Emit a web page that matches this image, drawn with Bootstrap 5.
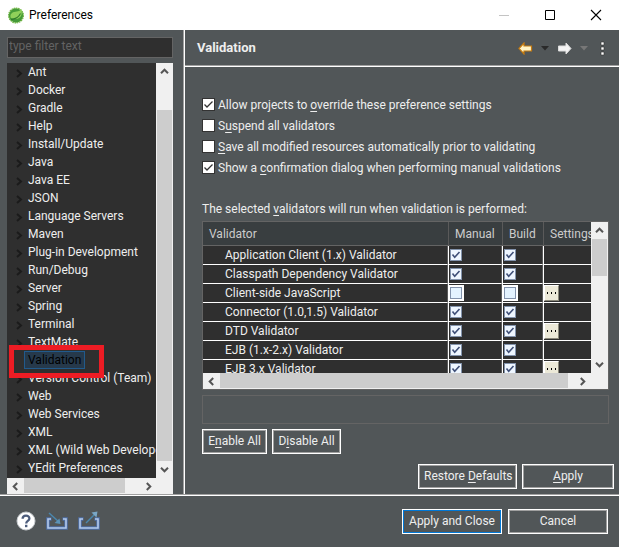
<!DOCTYPE html>
<html lang="en">
<head>
<meta charset="utf-8">
<meta name="viewport" content="width=device-width, initial-scale=1">
<title>Preferences</title>
<link href="https://cdn.jsdelivr.net/npm/bootstrap@5.3.0/dist/css/bootstrap.min.css" rel="stylesheet">
<style>
  body { font: 12px/18px Roboto, "Noto Sans", sans-serif; background: #515658; color: #eee; }
  button { font: inherit; color: inherit; padding: 0; border: 0; background: none; }
  svg { display: block; }
  u { text-underline-offset: 2px; }
  .title-bar { height: 30px; background: #fff; color: #000; padding: 0 17px 0 8px; }
  .title-bar span { margin-left: 5px; }
  .window-buttons { gap: 34px; }
  .side-pane { width: 184px; padding: 7px 10px 0 7px; border-right: 1px solid #a0a0a0; }
  .filter-box { height: 21px; padding: 0 1px 3px; border: 1px solid #646464; background: #2f2f2f; color: #eee; line-height: 15px; border-radius: 0; }
  .filter-box::placeholder { color: #636363; opacity: 1; }
  .tree-frame { margin-top: 5px; background: #f0f0f0; }
  .tree-list { background: #2f2f2f; }
  .tree-list li { height: 18px; padding-left: 8px; white-space: nowrap; }
  .tree-list .twisty { width: 9px; margin-top: 2px; }
  .tree-list a { color: #eee; padding: 0 3px; border: 1px solid transparent; line-height: 16px; }
  .tree-list a.picked { background: #26394b; border-color: #215a8c; color: #000; }
  .callout-box { left: 2px; top: 282px; width: 95px; height: 33px; border: 5px solid #ed1c24; pointer-events: none; }
  .scroll-y { width: 17px; background: #f0f0f0; }
  .scroll-x { height: 16px; background: #f0f0f0; }
  .scroll-y button { height: 17px; }
  .scroll-x button { width: 17px; }
  .scroll-y .thumb { background: #cdcdcd; margin: 0 1px; }
  .scroll-x .thumb { background: #cdcdcd; margin-bottom: 1px; }
  .main-pane { border-left: 1px solid #fff; }
  .page-head { height: 37px; padding: 0 14px 0 12px; border-bottom: 1px solid #fff; box-shadow: inset 0 -1px #a0a0a0; }
  .page-head h1 { font-size: 13px; line-height: 18px; }
  .menu-btn { margin-left: 12px; }
  .page-body { padding: 27px 10px 0 17px; }
  .option-row { height: 21px; gap: 3px; }
  .tick { appearance: none; width: 13px; height: 13px; margin: 0; flex: none; border: 1px solid #333; background: #fff; }
  .tick:checked { background-image: url("data:image/svg+xml,%3Csvg xmlns='http://www.w3.org/2000/svg' viewBox='0 0 11 11'%3E%3Cpath d='M1.5 5.5 4 8 9.5 2.5' fill='none' stroke='%23333' stroke-width='1.3'/%3E%3C/svg%3E"); }
  .list-caption { margin: 22px 0 3px; }
  .grid-frame { border: 1px solid #646464; height: 169px; }
  .grid-view { background: #2f2f2f; }
  .grid-view table { table-layout: fixed; width: 100%; border-collapse: separate; border-spacing: 0; white-space: nowrap; }
  .grid-view th { height: 24px; padding: 0 0 0 6px; font-weight: 400; background: #393e40; color: #ccc; border-bottom: 1px solid #646464; border-left: 1px solid #5a5a5a; overflow: hidden; }
  .grid-view th:first-child { border-left: 0; }
  .grid-view td { height: 19px; padding: 0; line-height: 18px; border-bottom: 1px solid #fff; border-left: 1px solid #fff; }
  .grid-view td:first-child { padding-left: 22px; border-left: 0; }
  .grid-view td:nth-child(-n+3) { border-right: 1px solid #5a5a5a; }
  .col-manual { width: 54px; } .col-build { width: 41px; } .col-settings { width: 48px; }
  .cell-tick { appearance: none; display: block; width: 12px; height: 12px; margin: 0 0 0 1px; border: 1px solid #8393ac; background: #eef6ff; }
  .cell-tick:checked { background-image: url("data:image/svg+xml,%3Csvg xmlns='http://www.w3.org/2000/svg' viewBox='0 0 10 10'%3E%3Cpath d='M1.5 4.5 3.7 7.3 8.5 2' fill='none' stroke='%23405078' stroke-width='1.6'/%3E%3C/svg%3E"); }
  .cell-tick:not(:checked) { background: #e4f3ff; box-shadow: 0 0 0 2px #fff; }
  .more-btn { display: block; width: 15px; height: 16px; background: #ece9d8; border: 1px solid #fff; border-right-color: #8a887a; border-bottom-color: #8a887a; color: #000; }
  .message-box { height: 29px; margin-top: 5px; border: 1px solid #646464; }
  .dlg-btn { height: 25px; border: 1px solid #fff; box-shadow: inset 0 0 0 1px #a0a0a0; padding: 0 5px; line-height: 21px; white-space: nowrap; }
  .dlg-btn.main-btn { box-shadow: inset 0 0 0 1px #0078d7; }
  .gap-tight { gap: 5px; }
  .enable-row { margin-top: 5px; }
  .enable-btn { min-width: 65px; }
  .disable-btn { min-width: 69px; }
  .apply-row { padding: 0 5px 5px; }
  .wide-btn { width: 92px; }
  .restore-btn { width: 99px; }
  .foot-btn { width: 100px; }
  .dlg-foot { height: 53px; padding: 0 11px 0 16px; gap: 6px; border-top: 1px solid #a0a0a0; box-shadow: inset 0 1px #fff; }
  .foot-icons { gap: 10px; }
</style>
<script src="https://cdn.jsdelivr.net/npm/bootstrap@5.3.0/dist/js/bootstrap.bundle.min.js"></script>
</head>
<body class="vh-100 d-flex flex-column overflow-hidden">
<svg width="0" height="0" class="position-absolute" aria-hidden="true">
  <symbol id="tw" viewBox="0 0 9 9"><path d="M2 1l4 3.5L2 8" fill="none" stroke="#1b1b1b" stroke-width="2"/></symbol>
  <symbol id="up" viewBox="0 0 9 9"><path d="M1 6.2l3.5-3.5L8 6.2" fill="none" stroke="#555" stroke-width="2"/></symbol>
  <symbol id="dn" viewBox="0 0 9 9"><path d="M1 2.8l3.5 3.5L8 2.8" fill="none" stroke="#555" stroke-width="2"/></symbol>
  <symbol id="lt" viewBox="0 0 9 9"><path d="M6.2 1L2.7 4.5 6.2 8" fill="none" stroke="#555" stroke-width="2"/></symbol>
  <symbol id="rt" viewBox="0 0 9 9"><path d="M2.8 1l3.5 3.5L2.8 8" fill="none" stroke="#555" stroke-width="2"/></symbol>
  <symbol id="dots" viewBox="0 0 13 14"><path d="M2 6h1v2H2zM6 6h1v2H6zM10 6h1v2h-1z" fill="#000"/></symbol>
</svg>

<header class="title-bar d-flex align-items-center flex-shrink-0">
  <svg width="16" height="17" viewBox="0 0 16 17"><circle cx="8" cy="8.500" r="7.200" fill="#459a38"/><circle cx="8" cy="8.500" r="7.400" fill="none" stroke="#6db33f" stroke-width="1.200" stroke-dasharray="1.600 .7"/><path d="M2.500 10.500c-.6-4.500 2.700-5.600 6-5.900 2.400-.2 3.900-.9 4.700-2.600 1.800 5.800-.7 9.700-5 9.900-2.200.1-4-.3-5.700-1.400z" fill="#8fd05a"/><path d="M2.800 12.600c4.300-.4 7.800-2.200 9.700-6" stroke="#2f7a2c" fill="none" stroke-width="1.100"/></svg>
  <span class="me-auto">Preferences</span>
  <div class="window-buttons d-flex align-items-center">
    <button type="button" aria-label="Minimize"><svg width="12" height="12"><path d="M1 6.500h10" stroke="#c4c4c4"/></svg></button>
    <button type="button" aria-label="Maximize"><svg width="12" height="12"><path d="M1.500 1.500h9v9h-9z" fill="none" stroke="#000"/></svg></button>
    <button type="button" aria-label="Close"><svg width="12" height="12"><path d="M1 1l10 10M11 1L1 11" stroke="#000" stroke-width="1.100"/></svg></button>
  </div>
</header>

<div class="d-flex flex-fill" style="min-height:0">
  <nav class="side-pane d-flex flex-column flex-shrink-0" aria-label="Preference pages">
    <input class="filter-box w-100" type="text" placeholder="type filter text" aria-label="Filter">
    <div class="tree-frame d-flex flex-column flex-fill position-relative">
      <div class="d-flex flex-fill" style="min-height:0">
        <ul class="tree-list list-unstyled mb-0 flex-fill overflow-hidden" id="tree"></ul>
        <div class="scroll-y d-flex flex-column flex-shrink-0">
          <button type="button" class="d-flex align-items-center justify-content-center" aria-label="Scroll up"><svg width="9" height="9"><use href="#up"/></svg></button>
          <div style="flex:30"></div><div class="thumb" style="flex:350"></div>
          <button type="button" class="d-flex align-items-center justify-content-center" aria-label="Scroll down"><svg width="9" height="9"><use href="#dn"/></svg></button>
        </div>
      </div>
      <div class="scroll-x d-flex flex-shrink-0 me-3">
        <button type="button" class="d-flex align-items-center justify-content-center" aria-label="Scroll left"><svg width="9" height="9"><use href="#lt"/></svg></button>
        <div class="thumb" style="flex:101"></div><div style="flex:15"></div>
        <button type="button" class="d-flex align-items-center justify-content-center" aria-label="Scroll right"><svg width="9" height="9"><use href="#rt"/></svg></button>
      </div>
      <div class="callout-box position-absolute"></div>
    </div>
  </nav>

  <main class="main-pane d-flex flex-column flex-fill" style="min-width:0">
    <div class="page-head d-flex align-items-center">
      <h1 class="fw-bold mb-0 me-auto">Validation</h1>
      <button type="button" aria-label="Back"><svg width="15" height="13" viewBox="0 0 15 13"><path d="M1 6.500L6 1v3h7.500v5H6v3z" fill="#fff3c4" stroke="#c47a10" stroke-width="1.200"/></svg></button>
      <button type="button" class="ms-2" aria-label="Back history"><svg width="8" height="5"><path d="M0 0h8L4 4.500z" fill="#2a2a2a"/></svg></button>
      <button type="button" class="ms-2" aria-label="Forward"><svg width="15" height="13" viewBox="0 0 15 13"><path d="M14 6.500L9 1v3H1.500v5H9v3z" fill="#f4f4f4" stroke="#dcdcdc"/></svg></button>
      <button type="button" class="ms-2" aria-label="Forward history"><svg width="8" height="5"><path d="M0 0h8L4 4.500z" fill="#777"/></svg></button>
      <button type="button" class="menu-btn" aria-label="View menu"><svg width="5" height="15"><path d="M1 1h3v3H1zM1 6h3v3H1zM1 11h3v3H1z" fill="#fff" stroke="#333" stroke-width=".6"/></svg></button>
    </div>

    <div class="page-body flex-fill">
      <div class="option-row d-flex align-items-center"><input class="tick" type="checkbox" id="o1" checked><label for="o1">Allow projects to <u>o</u>verride these preference settings</label></div>
      <div class="option-row d-flex align-items-center"><input class="tick" type="checkbox" id="o2"><label for="o2">S<u>u</u>spend all validators</label></div>
      <div class="option-row d-flex align-items-center"><input class="tick" type="checkbox" id="o3"><label for="o3"><u>S</u>ave all modified resources automatically prior to validating</label></div>
      <div class="option-row d-flex align-items-center"><input class="tick" type="checkbox" id="o4" checked><label for="o4">Show a <u>c</u>onfirmation dialog when performing manual validations</label></div>
      <p class="list-caption">The selected <u>v</u>alidators will run when validation is performed:</p>
      <div class="grid-frame d-flex">
        <div class="d-flex flex-column flex-fill" style="min-width:0">
          <div class="grid-view flex-fill overflow-hidden" style="min-height:0">
            <table>
              <colgroup><col><col class="col-manual"><col class="col-build"><col class="col-settings"></colgroup>
              <thead><tr><th>Validator</th><th>Manual</th><th>Build</th><th>Settings</th></tr></thead>
              <tbody id="rows"></tbody>
            </table>
          </div>
          <div class="scroll-x d-flex flex-shrink-0">
            <button type="button" class="d-flex align-items-center justify-content-center" aria-label="Scroll left"><svg width="9" height="9"><use href="#lt"/></svg></button>
            <div class="thumb" style="flex:348"></div><div style="flex:6"></div>
            <button type="button" class="d-flex align-items-center justify-content-center" aria-label="Scroll right"><svg width="9" height="9"><use href="#rt"/></svg></button>
          </div>
        </div>
        <div class="scroll-y d-flex flex-column flex-shrink-0 pb-3">
          <button type="button" class="d-flex align-items-center justify-content-center" aria-label="Scroll up"><svg width="9" height="9"><use href="#up"/></svg></button>
          <div class="thumb" style="flex:37"></div><div style="flex:79"></div>
          <button type="button" class="d-flex align-items-center justify-content-center" aria-label="Scroll down"><svg width="9" height="9"><use href="#dn"/></svg></button>
        </div>
      </div>
      <div class="message-box"></div>
      <div class="enable-row d-flex gap-tight">
        <button type="button" class="dlg-btn enable-btn">E<u>n</u>able All</button>
        <button type="button" class="dlg-btn disable-btn">D<u>i</u>sable All</button>
      </div>
    </div>
    <div class="apply-row d-flex justify-content-end gap-tight">
      <button type="button" class="dlg-btn restore-btn">Restore <u>D</u>efaults</button>
      <button type="button" class="dlg-btn wide-btn"><u>A</u>pply</button>
    </div>
  </main>
</div>

<footer class="dlg-foot d-flex align-items-center flex-shrink-0">
  <div class="foot-icons d-flex align-items-center me-auto">
    <button type="button" aria-label="Help"><svg width="20" height="20" viewBox="0 0 20 20"><circle cx="10" cy="10" r="9" fill="#fff" stroke="#c8ccd0"/><path d="M6.600 7.800C6.600 3.600 13.400 3.700 13.400 7.400c0 2.500-3.200 2.500-3.200 5" fill="none" stroke="#4d5d7c" stroke-width="2.300"/><path d="M9 13.800h2.400v2.400H9z" fill="#4d5d7c"/></svg></button>
    <button type="button" aria-label="Import"><svg width="22" height="20" viewBox="0 0 22 20"><path d="M5.500 8H2v9h18V8h-3.500" fill="none" stroke="#4f70a8" stroke-width="3.500"/><path d="M5 8H2v9h18V8h-3" fill="none" stroke="#b4caec" stroke-width="1.600"/><path d="M3 2l10 9" stroke="#4a86ad" stroke-width="1.500"/><path d="M14.500 13l-6-1 5-4.500z" fill="#5b93b8"/></svg></button>
    <button type="button" aria-label="Export"><svg width="22" height="20" viewBox="0 0 22 20"><path d="M5.500 8H2v9h18V8h-3.500" fill="none" stroke="#4f70a8" stroke-width="3.500"/><path d="M5 8H2v9h18V8h-3" fill="none" stroke="#b4caec" stroke-width="1.600"/><path d="M8 12l9-9" stroke="#4a86ad" stroke-width="1.500"/><path d="M19.500 .5l-1 6-5-5z" fill="#7aa7c6"/></svg></button>
  </div>
  <button type="button" class="dlg-btn main-btn foot-btn">Apply and Close</button>
  <button type="button" class="dlg-btn foot-btn">Cancel</button>
</footer>

<script>
  const pages = ["Ant", "Docker", "Gradle", "Help", "Install/Update", "Java", "Java EE", "JSON", "Language Servers", "Maven", "Plug-in Development", "Run/Debug", "Server", "Spring", "Terminal", "TextMate", "Validation", "Version Control (Team)", "Web", "Web Services", "XML", "XML (Wild Web Developer)", "YEdit Preferences"];
  document.getElementById("tree").innerHTML = pages.map(p => {
    const on = p === "Validation";
    return `<li class="d-flex align-items-center"><span class="twisty">${on ? "" : '<svg width="9" height="9"><use href="#tw"/></svg>'}</span><a href="#" class="text-decoration-none${on ? " picked" : ""}">${p}</a></li>`;
  }).join("");

  const validators = [["Application Client (1.x) Validator", 1, 0], ["Classpath Dependency Validator", 1, 0], ["Client-side JavaScript", 0, 1], ["Connector (1.0,1.5) Validator", 1, 0], ["DTD Validator", 1, 1], ["EJB (1.x-2.x) Validator", 1, 0], ["EJB 3.x Validator", 1, 1]];
  document.getElementById("rows").innerHTML = validators.map(([name, on, more]) => {
    const box = kind => `<td><input class="cell-tick" type="checkbox" aria-label="${name}, ${kind}"${on ? " checked" : ""}></td>`;
    return `<tr><td>${name}</td>${box("manual")}${box("build")}<td>${more ? `<button type="button" class="more-btn" aria-label="${name} settings"><svg width="13" height="14"><use href="#dots"/></svg></button>` : ""}</td></tr>`;
  }).join("");
</script>
</body>
</html>
